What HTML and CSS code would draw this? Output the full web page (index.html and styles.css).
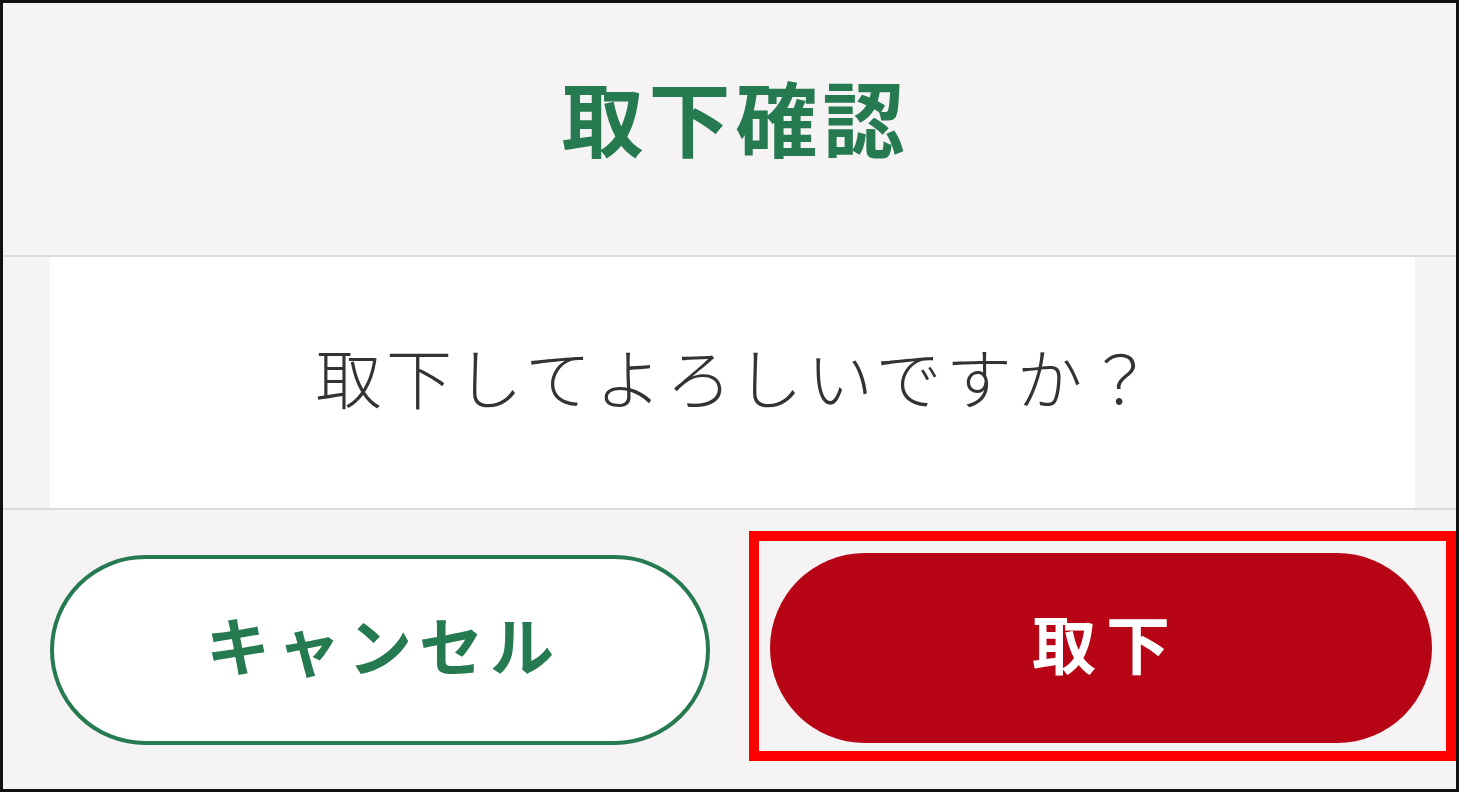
FILE: index.html
```html
<!DOCTYPE html>
<html lang="ja">
<head>
<meta charset="utf-8">
<title>取下確認</title>
<link rel="stylesheet" href="styles.css">
</head>
<body>
<div class="frame">
  <div class="header"><h1 class="title">取下確認</h1></div>
  <div class="content">
    <div class="message">取下してよろしいですか？</div>
  </div>
  <div class="footer">
    <button class="btn btn-cancel">キャンセル</button>
    <button class="btn btn-withdraw">取下</button>
    <div class="highlight"></div>
  </div>
</div>
</body>
</html>
```

FILE: styles.css
```css
html, body {
  margin: 0;
  padding: 0;
  background: #ffffff;
}
.frame {
  width: 1459px;
  height: 792px;
  box-sizing: border-box;
  border: 3px solid #111111;
  background: #f5f3f4;
  font-family: "Noto Sans CJK JP", "Noto Sans", sans-serif;
  display: flex;
  flex-direction: column;
  position: relative;
}
.header {
  height: 254px;
  display: flex;
  align-items: center;
  justify-content: center;
  padding-bottom: 26px;
  box-sizing: border-box;
  border-bottom: 2px solid #dcdbdb;
}
.title {
  margin: 0;
  font-size: 82px;
  font-weight: 700;
  color: #267a50;
  line-height: 1;
  letter-spacing: 5px;
  padding-left: 12px;
}
.content {
  height: 251px;
  padding: 0 41px 0 47px;
  border-bottom: 2px solid #dcdbdb;
  display: flex;
}
.message {
  flex: 1;
  background: #ffffff;
  display: flex;
  align-items: center;
  justify-content: center;
  font-size: 66px;
  font-weight: 300;
  color: #333333;
  letter-spacing: 4.5px;
  padding-bottom: 16px;
  padding-left: 8px;
}
.footer {
  flex: 1;
  display: flex;
  align-items: flex-start;
  padding: 45px 0 0 47px;
  gap: 60px;
  position: relative;
}
.btn {
  height: 190px;
  border-radius: 95px;
  font-family: "Noto Sans CJK JP", "Noto Sans", sans-serif;
  font-size: 64px;
  font-weight: 700;
  line-height: 1;
  display: flex;
  align-items: center;
  justify-content: center;
  box-sizing: border-box;
  padding: 0 0 14px 0;
  cursor: pointer;
}
.btn-cancel {
  width: 660px;
  background: #ffffff;
  border: 4px solid #267a50;
  color: #267a50;
  letter-spacing: 7px;
  padding-left: 7px;
}
.btn-withdraw {
  width: 662px;
  background: #b80515;
  border: none;
  color: #ffffff;
  margin-top: -2px;
  letter-spacing: 10px;
  padding-left: 10px;
}
.highlight {
  position: absolute;
  left: 746px;
  top: 21px;
  width: 707px;
  height: 230px;
  box-sizing: border-box;
  border: 10px solid #ff0000;
  pointer-events: none;
}
```
